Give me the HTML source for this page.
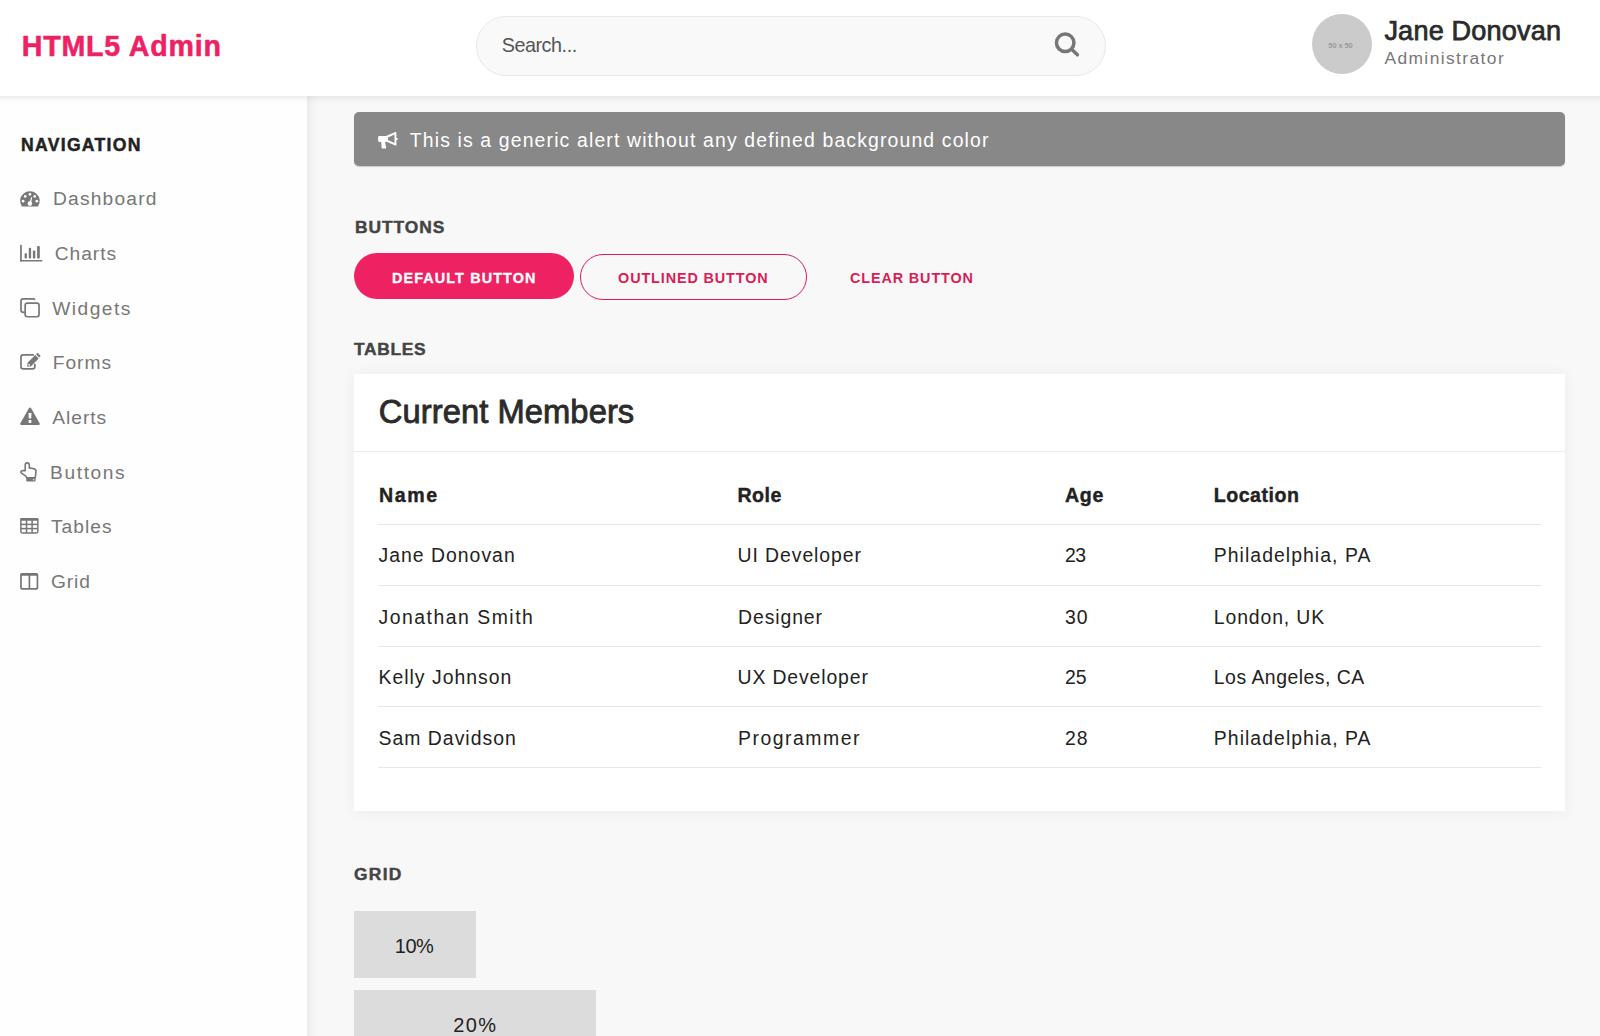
<!DOCTYPE html>
<html><head><meta charset="utf-8"><title>HTML5 Admin</title>
<style>
*{margin:0;padding:0;box-sizing:border-box}
html,body{width:1600px;height:1036px;overflow:hidden}
body{background:#f8f8f8;font-family:"Liberation Sans",sans-serif;position:relative}
.t{position:absolute;white-space:nowrap;line-height:1;z-index:10}
.ic{position:absolute;z-index:10}
.abs{position:absolute}
#header{left:0;top:0;width:1600px;height:96px;background:#fff;z-index:5}
#hshadow{left:0;top:96px;width:1600px;height:9px;background:linear-gradient(rgba(0,0,0,0.065),rgba(0,0,0,0.04) 30%,rgba(0,0,0,0.012) 60%,rgba(0,0,0,0));z-index:4}
#sidebar{left:0;top:96px;width:307px;height:940px;background:#fefefe;z-index:3}
#sshadow{left:307px;top:96px;width:12px;height:940px;background:linear-gradient(90deg,rgba(0,0,0,0.05),rgba(0,0,0,0.018) 40%,rgba(0,0,0,0));z-index:2}
#search{left:476px;top:16px;width:630px;height:60px;border:1px solid #e8e8e8;border-radius:30px;background:#f9f9f9;z-index:6}
#avatar{left:1312px;top:13.5px;width:60px;height:60px;border-radius:50%;background:#cbcbcb;z-index:6}
#alert{left:354px;top:112px;width:1211px;height:54px;background:#888;border-radius:5px;box-shadow:0 1px 1px rgba(0,0,0,0.18)}
.btn{position:absolute;border-radius:23px}
#card{left:354px;top:374px;width:1211px;height:437px;background:#fff;box-shadow:0 1px 14px rgba(0,0,0,0.055)}
.hl{position:absolute;height:1px;background:#e8e8e8}
.gbox{position:absolute;left:354px;background:#dcdcdc}
</style></head>
<body>
<div id="header" class="abs"></div>
<div id="hshadow" class="abs"></div>
<div id="sidebar" class="abs"></div>
<div id="sshadow" class="abs"></div>
<div id="search" class="abs"></div>
<div id="avatar" class="abs"></div>
<div class="t" style="left:1340.5px;top:41.6px;font-size:7.5px;color:#9a9a9a;font-weight:bold;transform:translateX(-50%);letter-spacing:-0.1px">50 x 50</div>
<div id="alert" class="abs"></div>
<div class="btn" style="left:354px;top:253px;width:220px;height:46px;background:#ee2263"></div>
<div class="btn" style="left:580px;top:254px;width:227px;height:46px;border:1.5px solid #d81d57"></div>
<div id="card" class="abs"></div>
<div class="hl" style="left:354px;width:1211px;top:451px;background:#ececec"></div>
<div class="hl" style="left:378px;width:1163px;top:524px"></div>
<div class="hl" style="left:378px;width:1163px;top:585px"></div>
<div class="hl" style="left:378px;width:1163px;top:645.5px"></div>
<div class="hl" style="left:378px;width:1163px;top:706px"></div>
<div class="hl" style="left:378px;width:1163px;top:767px"></div>
<div class="gbox" style="top:911px;width:121.5px;height:67px"></div>
<div class="gbox" style="top:990px;width:242px;height:67px"></div>

<svg class="ic" style="left:0;top:0" width="307" height="620" viewBox="0 0 307 620">
 <!-- dashboard -->
 <g transform="translate(20,191)">
  <path d="M1.9,15.6 A9.8,9.8 0 1 1 17.9,15.6 Z" fill="#777"/>
  <circle cx="9.9" cy="3.3" r="1.35" fill="#fff"/>
  <circle cx="5.2" cy="5.4" r="1.35" fill="#fff"/>
  <circle cx="14.7" cy="5.4" r="1.35" fill="#fff"/>
  <circle cx="3.1" cy="10.2" r="1.35" fill="#fff"/>
  <circle cx="16.8" cy="10.2" r="1.35" fill="#fff"/>
  <circle cx="9.9" cy="12.6" r="2.3" fill="#fff"/>
  <path d="M9.0,12.2 L11.4,5.9 L12.2,6.2 L10.9,12.8 Z" fill="#fff"/>
 </g>
 <!-- charts -->
 <g fill="#777">
  <rect x="20.1" y="244.8" width="1.7" height="16.6" rx="0.6"/>
  <rect x="20.1" y="259.9" width="22.3" height="1.6" rx="0.6"/>
  <rect x="24.6" y="253.2" width="2.3" height="5.4" rx="0.8"/>
  <rect x="28.8" y="247.7" width="2.3" height="10.9" rx="0.8"/>
  <rect x="32.9" y="250.4" width="2.4" height="8.2" rx="0.8"/>
  <rect x="37.1" y="246.0" width="2.7" height="12.6" rx="0.8"/>
 </g>
 <!-- widgets (clone) -->
 <g fill="none" stroke="#777" stroke-width="1.7">
  <path d="M35.0,299.8 Q34.4,298.9 33.2,298.9 L23.3,298.9 Q21.0,298.9 21.0,301.2 L21.0,310.0 Q21.0,312.3 23.3,312.3 L24.8,312.3"/>
  <rect x="25.15" y="303.05" width="13.9" height="13.7" rx="2.2"/>
 </g>
 <!-- forms -->
 <g>
  <path d="M33.2,354.9 L23.3,354.9 Q20.95,354.9 20.95,357.3 L20.95,366.5 Q20.95,368.85 23.3,368.85 L32.5,368.85 Q34.85,368.85 34.85,366.5 L34.85,364.4" fill="none" stroke="#777" stroke-width="1.7" stroke-linecap="round"/>
  <path d="M27.2,366.7 L27.6,362.7 L35.2,355.1 L38.7,358.6 L31.1,366.2 Z" fill="#777"/>
  <path d="M36.0,354.3 L37.1,353.2 Q37.5,352.9 37.9,353.2 L40.3,355.6 Q40.6,356.0 40.3,356.4 L39.2,357.5 Z" fill="#777"/>
  <circle cx="29.1" cy="364.8" r="0.9" fill="#fff"/>
 </g>
 <!-- alerts -->
 <g>
  <path d="M30,407.4 Q30.6,407.4 31,408.1 L39.7,423.6 Q40.1,425.1 38.6,425.1 L21.4,425.1 Q19.9,425.1 20.3,423.6 L29,408.1 Q29.4,407.4 30,407.4 Z" fill="#777"/>
  <path d="M28.5,412.9 L31.5,412.9 L31.2,418.5 L28.8,418.5 Z" fill="#fff"/>
  <rect x="28.6" y="419.9" width="2.8" height="3" rx="0.6" fill="#fff"/>
 </g>
 <!-- buttons (hand pointer) -->
 <g fill="none" stroke="#777" stroke-width="1.6" stroke-linejoin="round">
  <path d="M25.2,470.6 L25.2,465.0 Q25.2,462.9 27.3,462.9 Q29.3,462.9 29.3,465.0 L29.3,467.9 L34.0,468.7 Q36.1,469.2 36.0,471.6 L35.2,477.9 L26.9,477.9 Q26.3,476.4 24.8,475.4 L21.6,473.2 Q20.4,472.3 21.2,471.4 Q22.2,470.3 23.5,470.6 Z"/>
 </g>
 <rect x="26.2" y="478.1" width="9.4" height="3.5" rx="1" fill="#777"/>
 <circle cx="33.6" cy="479.8" r="0.7" fill="#fff"/>
 <!-- tables -->
 <g fill="none" stroke="#777" stroke-width="1.5">
  <rect x="20.85" y="518.75" width="17" height="14.2" rx="1.6"/>
  <line x1="26.5" y1="519" x2="26.5" y2="533"/>
  <line x1="32.1" y1="519" x2="32.1" y2="533"/>
  <line x1="21" y1="524.4" x2="37.8" y2="524.4"/>
  <line x1="21" y1="528.6" x2="37.8" y2="528.6"/>
 </g>
 <rect x="20.3" y="518.1" width="18.2" height="2.6" rx="1.2" fill="#777"/>
 <!-- grid (columns) -->
 <g fill="none" stroke="#777" stroke-width="1.7">
  <rect x="20.95" y="573.95" width="16.5" height="15.0" rx="1.8"/>
  <line x1="29.4" y1="574" x2="29.4" y2="589"/>
 </g>
 <rect x="20.3" y="573.2" width="17.8" height="2.6" rx="1.2" fill="#777"/>
</svg>
<svg class="ic" style="left:370px;top:125px" width="32" height="30" viewBox="0 0 32 30">
 <g fill="#fff">
  <path d="M9.2,11.1 Q8.1,11.1 8.1,12.2 L8.1,15.8 Q8.1,16.9 9.2,16.9 L11.2,16.9 L11.6,22.6 Q11.7,23.5 12.6,23.5 L15.4,23.5 Q16.3,23.5 16.1,22.6 L15.0,16.9 L16.6,16.9 L16.6,11.1 Z"/>
  <path d="M16.0,11.1 L25.4,7.1 Q26.4,6.7 26.4,7.7 L26.4,19.9 Q26.4,20.9 25.4,20.5 L16.0,16.4 Z M17.9,12.5 L17.9,15.1 L24.5,18.0 L24.5,9.6 Z" fill-rule="evenodd"/>
  <rect x="26" y="12.9" width="1.6" height="2.0" rx="0.5"/>
 </g>
</svg>
<svg class="ic" style="left:1040px;top:20px;z-index:6" width="50" height="50" viewBox="0 0 50 50">
 <circle cx="25.2" cy="22.8" r="8.75" fill="none" stroke="#777" stroke-width="3.5"/>
 <line x1="31.6" y1="29.3" x2="37.4" y2="34.8" stroke="#777" stroke-width="3.5" stroke-linecap="round"/>
</svg>
<div class="t" id="tx_logo" style="left:21.70px;top:32.00px;font-size:28.6px;letter-spacing:0.811px;color:#ee2263;font-weight:bold;-webkit-text-stroke:0.5px #ee2263;">HTML5 Admin</div>
<div class="t" id="tx_search" style="left:501.70px;top:36.40px;font-size:19.8px;letter-spacing:-0.462px;color:#555;">Search...</div>
<div class="t" id="tx_hname" style="left:1384.40px;top:17.25px;font-size:27.1px;letter-spacing:0.187px;color:#2b2b2b;-webkit-text-stroke:0.75px #2b2b2b;">Jane Donovan</div>
<div class="t" id="tx_admin" style="left:1384.40px;top:49.60px;font-size:17.4px;letter-spacing:1.405px;color:#777;">Administrator</div>
<div class="t" id="tx_navh" style="left:21.00px;top:136.50px;font-size:17.6px;letter-spacing:1.290px;color:#222;font-weight:bold;-webkit-text-stroke:0.45px #222;">NAVIGATION</div>
<div class="t" id="tx_n1" style="left:53.00px;top:189.20px;font-size:19.2px;letter-spacing:1.202px;color:#777;">Dashboard</div>
<div class="t" id="tx_n2" style="left:54.70px;top:244.20px;font-size:19.2px;letter-spacing:0.991px;color:#777;">Charts</div>
<div class="t" id="tx_n3" style="left:52.20px;top:299.20px;font-size:19.2px;letter-spacing:1.465px;color:#777;">Widgets</div>
<div class="t" id="tx_n4" style="left:52.80px;top:353.20px;font-size:19.2px;letter-spacing:0.967px;color:#777;">Forms</div>
<div class="t" id="tx_n5" style="left:52.20px;top:408.20px;font-size:19.2px;letter-spacing:0.989px;color:#777;">Alerts</div>
<div class="t" id="tx_n6" style="left:50.10px;top:463.20px;font-size:19.2px;letter-spacing:1.585px;color:#777;">Buttons</div>
<div class="t" id="tx_n7" style="left:50.90px;top:517.20px;font-size:19.2px;letter-spacing:1.062px;color:#777;">Tables</div>
<div class="t" id="tx_n8" style="left:50.90px;top:572.20px;font-size:19.2px;letter-spacing:0.904px;color:#777;">Grid</div>
<div class="t" id="tx_alert" style="left:409.75px;top:130.60px;font-size:19.4px;letter-spacing:1.149px;color:#fff;">This is a generic alert without any defined background color</div>
<div class="t" id="tx_sbtn" style="left:355.10px;top:218.60px;font-size:17.4px;letter-spacing:0.920px;color:#444;font-weight:bold;-webkit-text-stroke:0.45px #444;">BUTTONS</div>
<div class="t" id="tx_b1" style="left:391.90px;top:271.10px;font-size:14.4px;letter-spacing:1.123px;color:#fff;font-weight:bold;-webkit-text-stroke:0.3px #fff;">DEFAULT BUTTON</div>
<div class="t" id="tx_b2" style="left:618.10px;top:271.10px;font-size:14.4px;letter-spacing:0.878px;color:#d81d57;font-weight:bold;">OUTLINED BUTTON</div>
<div class="t" id="tx_b3" style="left:850.00px;top:271.10px;font-size:14.4px;letter-spacing:0.879px;color:#d81d57;font-weight:bold;">CLEAR BUTTON</div>
<div class="t" id="tx_stab" style="left:354.00px;top:340.60px;font-size:17.4px;letter-spacing:0.661px;color:#444;font-weight:bold;-webkit-text-stroke:0.45px #444;">TABLES</div>
<div class="t" id="tx_ctitle" style="left:378.75px;top:396.45px;font-size:32.7px;letter-spacing:0.082px;color:#2b2b2b;-webkit-text-stroke:0.85px #2b2b2b;">Current Members</div>
<div class="t" id="tx_th1" style="left:379.00px;top:485.50px;font-size:19.6px;letter-spacing:1.613px;color:#222;font-weight:bold;-webkit-text-stroke:0.4px #222;">Name</div>
<div class="t" id="tx_th2" style="left:737.50px;top:485.50px;font-size:19.6px;letter-spacing:0.439px;color:#222;font-weight:bold;-webkit-text-stroke:0.4px #222;">Role</div>
<div class="t" id="tx_th3" style="left:1064.90px;top:485.50px;font-size:19.6px;letter-spacing:0.778px;color:#222;font-weight:bold;-webkit-text-stroke:0.4px #222;">Age</div>
<div class="t" id="tx_th4" style="left:1213.80px;top:485.50px;font-size:19.6px;letter-spacing:0.495px;color:#222;font-weight:bold;-webkit-text-stroke:0.4px #222;">Location</div>
<div class="t" id="tx_sgrid" style="left:354.10px;top:865.60px;font-size:17.4px;letter-spacing:1.233px;color:#444;font-weight:bold;-webkit-text-stroke:0.45px #444;">GRID</div>
<div class="t" id="tx_g1" style="left:394.80px;top:936.30px;font-size:20px;letter-spacing:-0.500px;color:#222;">10%</div>
<div class="t" id="tx_g2" style="left:453.30px;top:1015.30px;font-size:20px;letter-spacing:1.400px;color:#222;">20%</div>
<div class="t" id="tx_r0c0" style="left:378.50px;top:545.60px;font-size:19.4px;letter-spacing:1.011px;color:#222;">Jane Donovan</div>
<div class="t" id="tx_r0c1" style="left:737.50px;top:545.60px;font-size:19.4px;letter-spacing:0.936px;color:#222;">UI Developer</div>
<div class="t" id="tx_r0c2" style="left:1064.90px;top:545.60px;font-size:19.4px;letter-spacing:-0.534px;color:#222;">23</div>
<div class="t" id="tx_r0c3" style="left:1213.80px;top:545.60px;font-size:19.4px;letter-spacing:1.051px;color:#222;">Philadelphia, PA</div>
<div class="t" id="tx_r1c0" style="left:378.50px;top:607.60px;font-size:19.4px;letter-spacing:1.505px;color:#222;">Jonathan Smith</div>
<div class="t" id="tx_r1c1" style="left:738.10px;top:607.60px;font-size:19.4px;letter-spacing:0.900px;color:#222;">Designer</div>
<div class="t" id="tx_r1c2" style="left:1064.90px;top:607.60px;font-size:19.4px;letter-spacing:1.166px;color:#222;">30</div>
<div class="t" id="tx_r1c3" style="left:1213.80px;top:607.60px;font-size:19.4px;letter-spacing:0.885px;color:#222;">London, UK</div>
<div class="t" id="tx_r2c0" style="left:378.50px;top:667.60px;font-size:19.4px;letter-spacing:1.003px;color:#222;">Kelly Johnson</div>
<div class="t" id="tx_r2c1" style="left:737.50px;top:667.60px;font-size:19.4px;letter-spacing:0.876px;color:#222;">UX Developer</div>
<div class="t" id="tx_r2c2" style="left:1064.90px;top:667.60px;font-size:19.4px;letter-spacing:-0.034px;color:#222;">25</div>
<div class="t" id="tx_r2c3" style="left:1213.80px;top:667.60px;font-size:19.4px;letter-spacing:0.510px;color:#222;">Los Angeles, CA</div>
<div class="t" id="tx_r3c0" style="left:378.50px;top:728.60px;font-size:19.4px;letter-spacing:1.018px;color:#222;">Sam Davidson</div>
<div class="t" id="tx_r3c1" style="left:738.10px;top:728.60px;font-size:19.4px;letter-spacing:1.504px;color:#222;">Programmer</div>
<div class="t" id="tx_r3c2" style="left:1064.90px;top:728.60px;font-size:19.4px;letter-spacing:1.166px;color:#222;">28</div>
<div class="t" id="tx_r3c3" style="left:1213.80px;top:728.60px;font-size:19.4px;letter-spacing:1.057px;color:#222;">Philadelphia, PA</div>
</body></html>
